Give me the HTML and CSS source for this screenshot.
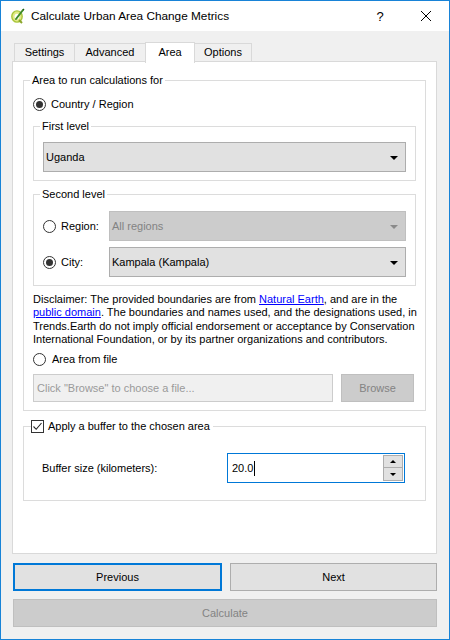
FILE: index.html
```html
<!DOCTYPE html>
<html>
<head>
<meta charset="utf-8">
<link rel="stylesheet" href="styles.css">
</head>
<body>
<div class="window">
  <div class="titlebar">
    <svg class="appicon" width="16" height="16" viewBox="0 0 16 16">
      <ellipse cx="7" cy="8.5" rx="5.2" ry="5.6" fill="#e2ea86" stroke="#a9c63a" stroke-width="1.4"/>
      <ellipse cx="7" cy="8.5" rx="2.4" ry="2.8" fill="#ffffff"/>
      <path d="M9 12 L12 15" stroke="#8aa52a" stroke-width="2"/>
      <path d="M6 11 L13 2" stroke="#3f8a2a" stroke-width="2" stroke-linecap="round"/>
      <path d="M13 2 L14 1" stroke="#1e5b12" stroke-width="1.5"/>
    </svg>
    <span class="title">Calculate Urban Area Change Metrics</span>
    <span class="tb-btn help">?</span>
    <span class="tb-btn close">
      <svg width="12" height="12" viewBox="0 0 12 12"><path d="M1 1 L11 11 M11 1 L1 11" stroke="#000" stroke-width="1"/></svg>
    </span>
  </div>
  <div class="body">
    <div class="tabs">
      <div class="tab t-settings">Settings</div>
      <div class="tab t-adv">Advanced</div>
      <div class="tab t-area active">Area</div>
      <div class="tab t-opt">Options</div>
    </div>
    <div class="panel">
      <fieldset class="group g-area">
        <legend>Area to run calculations for</legend>
        <div class="radio-row r-country"><span class="radio checked"></span><span>Country / Region</span></div>
        <fieldset class="group g-first">
          <legend>First level</legend>
          <div class="combo"><span>Uganda</span><span class="arrow"></span></div>
        </fieldset>
        <fieldset class="group g-second">
          <legend>Second level</legend>
          <div class="lvl-row r-region">
            <span class="radio"></span><span class="lvl-label">Region:</span>
            <div class="combo disabled"><span>All regions</span><span class="arrow"></span></div>
          </div>
          <div class="lvl-row r-city">
            <span class="radio checked"></span><span class="lvl-label">City:</span>
            <div class="combo"><span>Kampala (Kampala)</span><span class="arrow"></span></div>
          </div>
        </fieldset>
        <p class="disclaimer">Disclaimer: The provided boundaries are from <a href="#">Natural Earth</a>, and are in the<br><a href="#">public domain</a>. The boundaries and names used, and the designations used, in<br>Trends.Earth do not imply official endorsement or acceptance by Conservation<br>International Foundation, or by its partner organizations and contributors.</p>
        <div class="radio-row r-file"><span class="radio"></span><span>Area from file</span></div>
        <div class="file-row">
          <div class="file-input">Click "Browse" to choose a file...</div>
          <div class="browse">Browse</div>
        </div>
      </fieldset>
      <fieldset class="group g-buffer">
        <legend><span class="check"><svg width="11" height="11" viewBox="0 0 11 11"><path d="M1.5 5.5 L4.2 8.3 L9.5 2" fill="none" stroke="#222" stroke-width="1.1"/></svg></span>Apply a buffer to the chosen area</legend>
        <div class="buf-row">
          <span class="buf-label">Buffer size (kilometers):</span>
          <div class="spin">
            <span class="spin-val">20.0<span class="caret"></span></span>
            <div class="spin-btns">
              <span class="sb up"><span class="tri-up"></span></span>
              <span class="sb down"><span class="tri-down"></span></span>
            </div>
          </div>
        </div>
      </fieldset>
    </div>
    <div class="btn-row">
      <div class="btn focus">Previous</div>
      <div class="btn">Next</div>
    </div>
    <div class="btn calc">Calculate</div>
  </div>
</div>
</body>
</html>
```
FILE: styles.css
```css
* { box-sizing: border-box; }
html, body { margin: 0; padding: 0; }
body {
  font-family: "Liberation Sans", Arial, sans-serif;
  font-size: 11px;
  color: #000;
  background: #fff;
}
.window {
  width: 450px;
  height: 640px;
  border: 1px solid #1883d7;
  background: #f0f0f0;
  display: flex;
  flex-direction: column;
}
.titlebar {
  height: 30px;
  background: #fff;
  display: flex;
  align-items: center;
  flex-shrink: 0;
}
.appicon { margin-left: 9px; }
.title { margin-left: 5px; font-size: 11.8px; flex: 1; }
.tb-btn { width: 46px; height: 30px; display: flex; align-items: center; justify-content: center; }
.help { font-size: 13px; }
.body {
  padding: 12px 12px 0 11px;
  flex: 1;
  display: flex;
  flex-direction: column;
}
.tabs {
  display: flex;
  height: 18px;
  padding-left: 2px;
  position: relative;
  z-index: 2;
}
.tab {
  height: 19px;
  border: 1px solid #d9d9d9;
  border-right: none;
  background: #f0f0f0;
  display: flex;
  align-items: center;
  justify-content: center;
  padding-bottom: 1px;
}
.t-settings { width: 60px; }
.t-adv { width: 71px; }
.t-area { width: 50px; }
.t-opt { width: 57px; border-right: 1px solid #d9d9d9; }
.tab.active {
  background: #fff;
  height: 21px;
  margin-top: -1px;
  border-right: 1px solid #d9d9d9;
  border-bottom: none;
  padding-bottom: 3px;
}
.tab.active + .tab { border-left: none; }
.panel {
  height: 493px;
  border: 1px solid #d9d9d9;
  background: #fff;
  padding: 11px 10px 0 10px;
  display: flex;
  flex-direction: column;
}
fieldset.group {
  border: 1px solid #dcdcdc;
  margin: 0;
  padding: 0;
  min-width: 0;
}
fieldset.group > legend {
  padding: 0 2px;
  margin-left: -3px;
  line-height: 14px;
}
fieldset.g-area { height: 338px; padding: 9px 9px 0 9px; }
.radio-row { display: flex; align-items: center; height: 16px; }
.radio {
  width: 13px; height: 13px; border: 1px solid #333; border-radius: 50%;
  background: #fff; display: inline-flex; align-items: center; justify-content: center;
  flex-shrink: 0;
}
.radio.checked::after { content: ""; width: 7px; height: 7px; border-radius: 50%; background: #333; }
.r-country .radio { margin-right: 5px; }
fieldset.g-first { margin-top: 7px; height: 62px; padding: 9px 9px 0 9px; }
.combo {
  height: 30px;
  background: #e1e1e1;
  border: 1px solid #adadad;
  display: flex;
  align-items: center;
  justify-content: space-between;
  padding: 0 7px 0 2px;
}
.combo.disabled { background: #cccccc; border-color: #bfbfbf; color: #838383; }
.arrow {
  width: 0; height: 0;
  border-left: 4px solid transparent; border-right: 4px solid transparent;
  border-top: 4px solid #000;
  margin-top: 1px;
}
.combo.disabled .arrow { border-top-color: #8a8a8a; }
fieldset.g-second { margin-top: 6px; height: 99px; padding: 10px 9px 0 9px; }
.lvl-row { display: flex; align-items: center; height: 30px; }
.r-city { margin-top: 6px; }
.lvl-label { width: 48px; margin-left: 5px; flex-shrink: 0; }
.lvl-row .combo { flex: 1; }
.disclaimer { margin: 7px 0 0 0; line-height: 13.3px; white-space: nowrap; }
.disclaimer a { color: #0000ff; }
.r-file { margin-top: 5px; }
.r-file .radio { margin-right: 6px; }
.file-row { display: flex; margin-top: 7px; gap: 8px; }
.file-input {
  width: 300px; height: 28px; border: 1px solid #cccccc; background: #f0f0f0;
  color: #9a9a9a; display: flex; align-items: center; padding-left: 3px;
}
.browse {
  width: 73px; height: 28px; background: #cccccc; border: 1px solid #bfbfbf;
  color: #838383; display: flex; align-items: center; justify-content: center;
}
fieldset.g-buffer { margin-top: 8px; height: 82px; padding: 0 20px 0 18px; }
fieldset.g-buffer > legend { display: flex; align-items: center; margin-left: -11px; padding: 0 3px 0 0; }
.check {
  width: 13px; height: 13px; border: 1px solid #333; background: #fff;
  display: inline-flex; align-items: center; justify-content: center; margin-right: 4px;
}
.buf-row { display: flex; align-items: center; margin-top: 20px; }
.buf-label { width: 185px; flex-shrink: 0; }
.spin {
  flex: 1; height: 30px; border: 1px solid #0078d7; background: #fff;
  display: flex; align-items: center; justify-content: space-between; padding: 0 1px 0 4px;
}
.spin-val { display: flex; align-items: center; }
.caret { width: 1px; height: 15px; background: #000; margin-left: 1px; }
.spin-btns { display: flex; flex-direction: column; width: 20px; }
.sb {
  height: 13px; background: #e1e1e1; border: 1px solid #adadad;
  display: flex; align-items: center; justify-content: center;
}
.sb.down { border-top: none; }
.tri-up { width: 0; height: 0; border-left: 3px solid transparent; border-right: 3px solid transparent; border-bottom: 3px solid #000; }
.tri-down { width: 0; height: 0; border-left: 3px solid transparent; border-right: 3px solid transparent; border-top: 3px solid #000; }
.btn-row { display: flex; gap: 8px; margin-top: 9px; padding-left: 1px; }
.btn {
  flex: 1; height: 28px; background: #e1e1e1; border: 1px solid #adadad;
  display: flex; align-items: center; justify-content: center;
}
.btn.focus { border: 2px solid #0078d7; }
.calc {
  flex: none; margin-top: 8px; margin-left: 1px;
  background: #cccccc; border-color: #bfbfbf; color: #838383;
}
```
